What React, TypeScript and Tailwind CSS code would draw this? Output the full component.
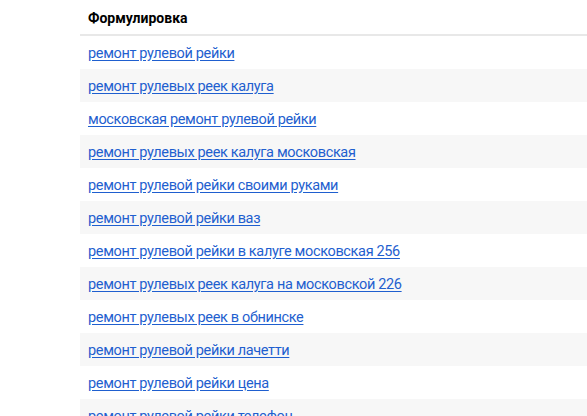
import React from "react";

const rows = [
  "ремонт рулевой рейки",
  "ремонт рулевых реек калуга",
  "московская ремонт рулевой рейки",
  "ремонт рулевых реек калуга московская",
  "ремонт рулевой рейки своими руками",
  "ремонт рулевой рейки ваз",
  "ремонт рулевой рейки в калуге московская 256",
  "ремонт рулевых реек калуга на московской 226",
  "ремонт рулевых реек в обнинске",
  "ремонт рулевой рейки лачетти",
  "ремонт рулевой рейки цена",
  "ремонт рулевой рейки телефон",
];

export default function App() {
  return (
    <div
      className="w-[587px] h-[416px] overflow-hidden bg-white pl-[80px]"
      style={{ fontFamily: 'Roboto, "Noto Sans", sans-serif' }}
    >
      <div className="h-[36px] border-b-2 border-[#e8e8e8] flex items-center pl-[8px] pt-[2px]">
        <span className="text-[14px] font-bold text-black">Формулировка</span>
      </div>
      {rows.map((r, i) => (
        <div
          key={i}
          className={
            "h-[33px] flex items-center pl-[8px] pt-[2px] " +
            (i % 2 === 1 ? "bg-[#f7f7f7]" : "bg-white")
          }
        >
          <a
            href="#"
            className="text-[14.5px] tracking-[-0.35px] text-[#1f5fcf] underline underline-offset-2 whitespace-nowrap"
          >
            {r}
          </a>
        </div>
      ))}
    </div>
  );
}
